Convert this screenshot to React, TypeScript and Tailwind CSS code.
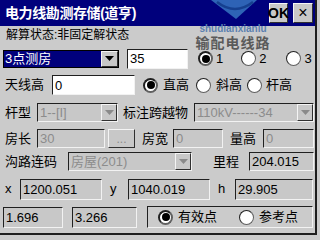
import React from "react";

const sunken =
  "border border-t-[#202020] border-l-[#202020] border-r-[#f2f2f2] border-b-[#f2f2f2]";
const raised =
  "border border-t-[#f4f4f4] border-l-[#f4f4f4] border-r-[#303030] border-b-[#303030] bg-[#c8c8c8]";

function Tri({ gray }: { gray?: boolean }) {
  return (
    <svg width="9" height="5" viewBox="0 0 9 5">
      <path d="M0 0 L9 0 L4.5 5 Z" fill={gray ? "#8a8a8a" : "#000"} />
    </svg>
  );
}

function Radio({ on }: { on?: boolean }) {
  return (
    <div
      className={`w-[15px] h-[15px] rounded-full border-[1.5px] border-t-[#202020] border-l-[#202020] border-r-[#606060] border-b-[#606060] bg-white flex items-center justify-center shrink-0 ${
        on ? "border-[2px] border-[#000]" : ""
      }`}
    >
      {on && <div className="w-[8px] h-[8px] rounded-full bg-black" />}
    </div>
  );
}

function Field({
  w,
  h,
  ml,
  value,
  white,
  dim,
}: {
  w: string;
  h: string;
  ml?: string;
  value: string;
  white?: boolean;
  dim?: boolean;
}) {
  return (
    <div
      className={`${w} ${h} ${ml ?? ""} ${sunken} ${
        white ? "bg-white" : "bg-[#c8c8c8]"
      } flex items-center pl-[2px] shrink-0 text-[13px] leading-none ${
        dim ? "text-[#8c8c8c]" : "text-black"
      }`}
    >
      {value}
    </div>
  );
}

function DSelect({
  w,
  ml,
  value,
}: {
  w: string;
  ml?: string;
  value: string;
}) {
  return (
    <div
      className={`${w} h-[19px] ${ml ?? ""} ${sunken} bg-[#c8c8c8] flex items-stretch shrink-0`}
    >
      <div className="flex-1 flex items-center pl-[2px] text-[13px] leading-none text-[#8c8c8c]">
        {value}
      </div>
      <div className={`w-[16px] ${raised} flex items-center justify-center`}>
        <Tri gray />
      </div>
    </div>
  );
}

export default function App() {
  return (
    <div className="relative w-[320px] h-[240px] overflow-hidden bg-[#cbcbcb] font-['Liberation_Sans','Noto_Sans_CJK_SC',sans-serif] text-black">
      <div className="w-[317px] h-[235px] border-r-[2px] border-b-[2px] border-[#1e1e1e] flex flex-col">
        {/* title bar */}
        <div className="h-[26px] bg-[#00007c] flex items-center pl-[5px] shrink-0">
          <span className="text-white font-bold text-[14px] leading-none tracking-[-0.4px]">
            电力线勘测存储(道亨)
          </span>
          <div className="ml-auto mr-[2px] flex gap-[5px]">
            <div
              className={`w-[19px] h-[20px] ${raised} flex items-center justify-center text-[14px] font-bold leading-none`}
            >
              OK
            </div>
            <div
              className={`w-[20px] h-[20px] ${raised} flex items-center justify-center text-[16px] leading-none`}
            >
              ×
            </div>
          </div>
        </div>

        {/* status */}
        <div className="mt-[2px] h-[13px] pl-[6px] flex items-center text-[12px] leading-none">
          解算状态:非固定解状态
        </div>

        {/* row 2 */}
        <div className="mt-[8px] h-[19px] flex items-center">
          <div className="ml-[3px] w-[116px] h-[18px] border border-black flex items-stretch">
            <div className="flex-1 bg-[#00007c] flex items-center pl-[1px] text-white text-[13px] leading-none">
              3点测房
            </div>
            <div className={`w-[17px] ${raised} flex items-center justify-center`}>
              <Tri />
            </div>
          </div>
          <Field w="w-[61px]" h="h-[20px]" ml="ml-[8px]" value="35" white />
          <div className="ml-[10px] flex items-center">
            <Radio on />
            <span className="ml-[3px] text-[13px] leading-none">1</span>
          </div>
          <div className="ml-[18px] flex items-center">
            <Radio />
            <span className="ml-[3px] text-[13px] leading-none">2</span>
          </div>
          <div className="ml-[20px] flex items-center">
            <Radio />
            <span className="ml-[3px] text-[13px] leading-none">3</span>
          </div>
        </div>

        {/* row 3 */}
        <div className="mt-[7px] h-[20px] flex items-center text-[13px]">
          <span className="ml-[5px] w-[47px]">天线高</span>
          <Field w="w-[83px]" h="h-[20px]" value="0" white />
          <div className="ml-[8px] flex items-center">
            <Radio on />
            <span className="ml-[5px]">直高</span>
          </div>
          <div className="ml-[7px] flex items-center">
            <Radio />
            <span className="ml-[5px]">斜高</span>
          </div>
          <div className="ml-[5px] flex items-center">
            <Radio />
            <span className="ml-[4px]">杆高</span>
          </div>
        </div>

        {/* row 4 */}
        <div className="mt-[8px] h-[19px] flex items-center text-[13px]">
          <span className="ml-[5px] w-[32px]">杆型</span>
          <DSelect w="w-[81px]" value="1--[I]" />
          <span className="ml-[5px] w-[71px]">标注跨越物</span>
          <DSelect w="w-[120px]" value="110kV------34" />
        </div>

        {/* row 5 */}
        <div className="mt-[7px] h-[19px] flex items-center text-[13px]">
          <span className="ml-[5px] w-[32px]">房长</span>
          <Field w="w-[68px]" h="h-[19px]" value="30" dim />
          <div
            className={`ml-[3px] w-[27px] h-[19px] ${raised} flex items-center justify-center text-[#8c8c8c] text-[12px] leading-none`}
          >
            ...
          </div>
          <span className="ml-[7px] w-[31px]">房宽</span>
          <Field w="w-[50px]" h="h-[19px]" value="0" dim />
          <span className="ml-[7px] w-[33px]">量高</span>
          <Field w="w-[51px]" h="h-[19px]" value="0" dim />
        </div>

        {/* row 6 */}
        <div className="mt-[4px] h-[19px] flex items-center text-[13px]">
          <span className="ml-[5px] w-[63px]">沟路连码</span>
          <DSelect w="w-[124px]" value="房屋(201)" />
          <span className="ml-[21px] w-[36px]">里程</span>
          <Field w="w-[65px]" h="h-[19px]" value="204.015" />
        </div>

        {/* row 7 */}
        <div className="mt-[7px] h-[22px] flex items-center text-[13px]">
          <span className="ml-[5px] w-[15px]">x</span>
          <Field w="w-[82px]" h="h-[21px]" value="1200.051" />
          <span className="ml-[8px] w-[18px]">y</span>
          <Field w="w-[82px]" h="h-[21px]" value="1040.019" />
          <span className="ml-[8px] w-[17px]">h</span>
          <Field w="w-[78px]" h="h-[21px]" value="29.905" />
        </div>

        {/* row 8 */}
        <div className="mt-[6px] h-[22px] flex items-center text-[13px]">
          <Field w="w-[60px]" h="h-[21px]" ml="ml-[3px]" value="1.696" />
          <Field w="w-[65px]" h="h-[21px]" ml="ml-[9px]" value="3.266" />
          <div className={`ml-[10px] w-[166px] h-[22px] ${sunken} flex items-center`}>
            <div className="ml-[10px] flex items-center">
              <Radio on />
              <span className="ml-[5px]">有效点</span>
            </div>
            <div className="ml-[22px] flex items-center">
              <Radio />
              <span className="ml-[5px]">参考点</span>
            </div>
          </div>
        </div>
      </div>

      {/* watermark overlay */}
      <div className="absolute left-[193px] top-0 w-[80px] pointer-events-none flex flex-col items-center">
        <svg width="46" height="19" viewBox="0 0 46 19" className="ml-[2px]">
          <path d="M0 0 L46 0 L25 19 Z" fill="#2e63b6" />
          <path d="M6 2 Q24 16 42 2" stroke="#16408f" strokeWidth="2.5" fill="none" />
        </svg>
        <div className="mt-[5px] text-[10px] font-bold leading-none text-[#5b80b0]">
          shudianxianlu
        </div>
        <div className="mt-[2px] text-[14px] font-bold leading-none text-[#5a5a5a] tracking-[1px]">
          输配电线路
        </div>
      </div>
    </div>
  );
}
